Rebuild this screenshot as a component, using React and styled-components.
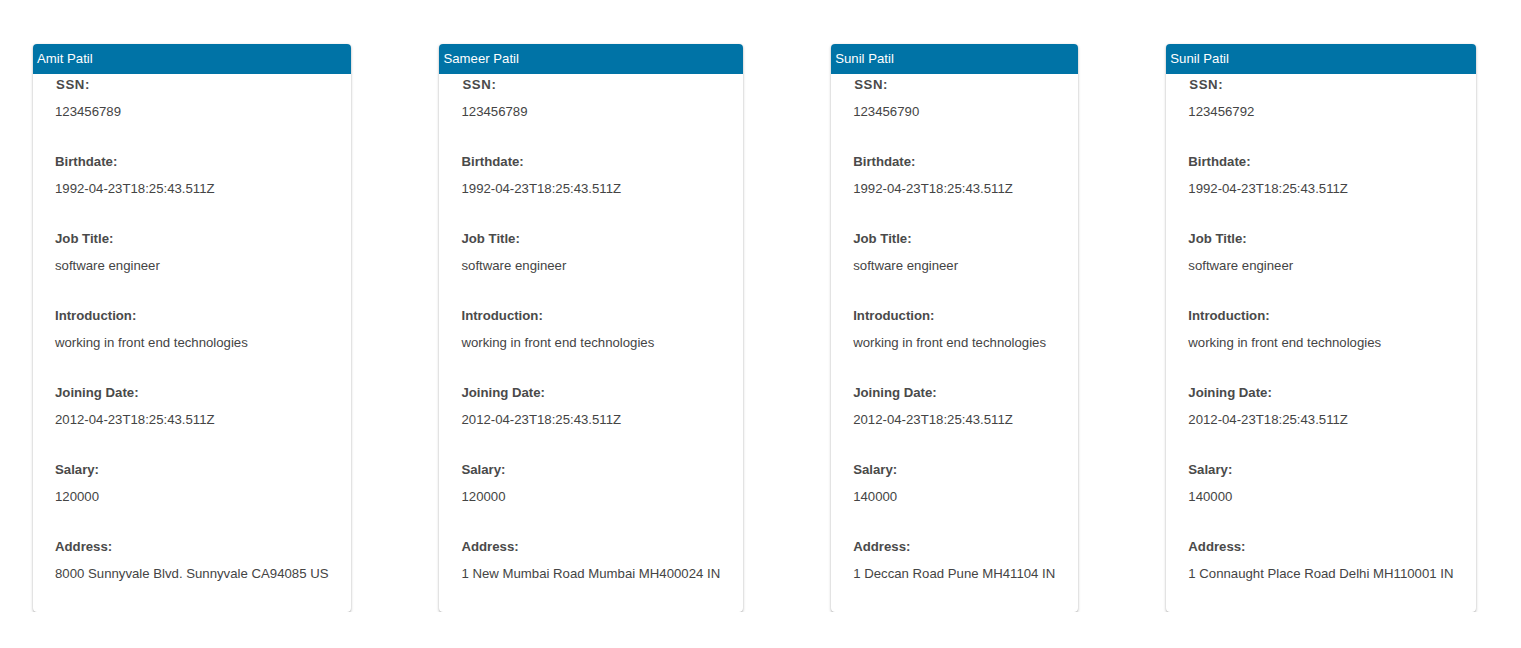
import React from 'react'
import styled, { createGlobalStyle } from 'styled-components';

const employees = [
  { name: 'Amit Patil', ssn: '123456789', salary: '120000', address: '8000 Sunnyvale Blvd. Sunnyvale CA94085 US' },
  { name: 'Sameer Patil', ssn: '123456789', salary: '120000', address: '1 New Mumbai Road Mumbai MH400024 IN' },
  { name: 'Sunil Patil', ssn: '123456790', salary: '140000', address: '1 Deccan Road Pune MH41104 IN' },
  { name: 'Sunil Patil', ssn: '123456792', salary: '140000', address: '1 Connaught Place Road Delhi MH110001 IN' },
]

function EmployeeCard({ e }) {
  const fields = [
    ['SSN:', e.ssn],
    ['Birthdate:', '1992-04-23T18:25:43.511Z'],
    ['Job Title:', 'software engineer'],
    ['Introduction:', 'working in front end technologies'],
    ['Joining Date:', '2012-04-23T18:25:43.511Z'],
    ['Salary:', e.salary],
    ['Address:', e.address],
  ]
  return (
    <Card>
      <Header>{e.name}</Header>
      <Body>
        {fields.map(([label, value]) => (
          <Field key={label}>
            <Label $spaced={label === 'SSN:'}>{label}</Label>
            <Value>{value}</Value>
          </Field>
        ))}
      </Body>
    </Card>
  )
}

function App() {
  return (
    <>
      <GlobalStyle />
      <List>
        {employees.map((e, i) => <EmployeeCard key={i} e={e} />)}
      </List>
    </>
  )
}

const GlobalStyle = createGlobalStyle`
  body {
    margin: 0;
    background: #fff;
    font-family: "Liberation Sans", Arial, sans-serif;
  }
`

const List = styled.div`
  display: flex;
  align-items: flex-start;
  gap: 88px;
  padding: 44px 0 0 33px;
`

const Card = styled.div`
  background: #fff;
  border-radius: 4px;
  box-shadow: 0 1px 3px rgba(0, 0, 0, 0.28), 0 1px 1px rgba(0, 0, 0, 0.12);
  overflow: hidden;
`

const Header = styled.div`
  background: #0073a6;
  color: #fff;
  font-size: 13.2px;
  height: 30px;
  line-height: 30px;
  padding: 0 4px;
  white-space: nowrap;
`

const Body = styled.div`
  display: flex;
  flex-direction: column;
  gap: 30px;
  padding: 1px 23px 28px 22px;
`

const Field = styled.div`
  display: flex;
  flex-direction: column;
  gap: 7px;
`

const Label = styled.div`
  font-size: 13.2px;
  font-weight: bold;
  line-height: 20px;
  color: #4a4a4a;
  letter-spacing: ${p => (p.$spaced ? '0.6px' : '0')};
  padding-left: ${p => (p.$spaced ? '1px' : '0')};
  white-space: nowrap;
`

const Value = styled.div`
  font-size: 13.2px;
  line-height: 20px;
  color: #444;
  white-space: nowrap;
`

export default App
